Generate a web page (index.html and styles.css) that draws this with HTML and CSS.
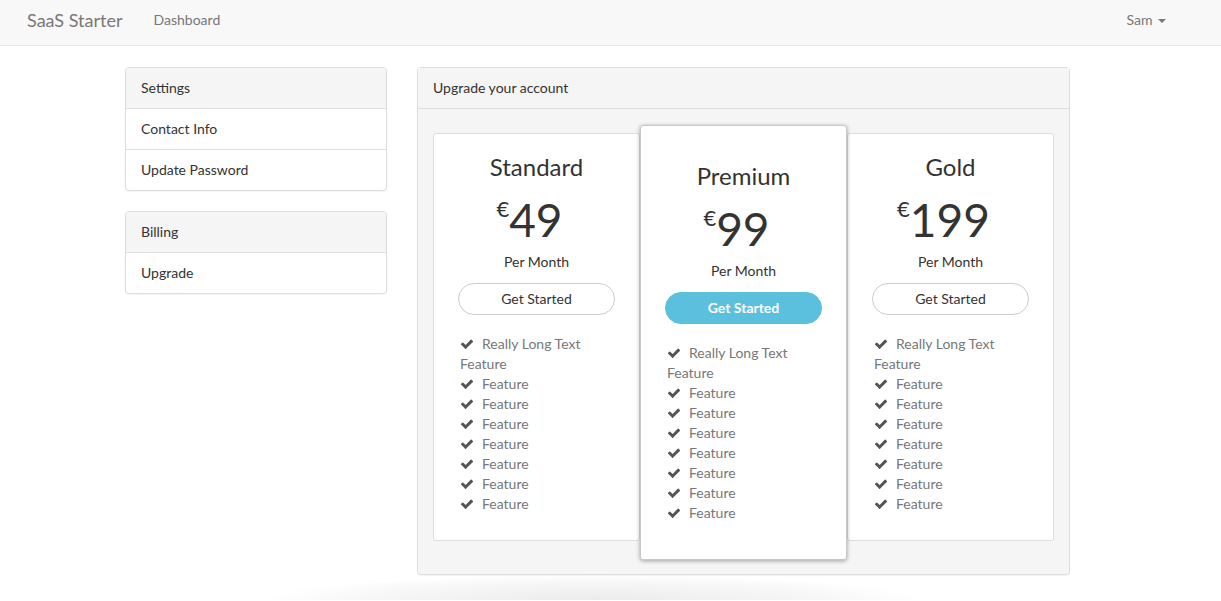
FILE: index.html
```html
<!DOCTYPE html>
<html>
<head>
<meta charset="utf-8">
<title>SaaS Starter</title>
<link rel="stylesheet" href="styles.css">
</head>
<body>
<nav class="navbar">
  <a class="brand" href="#">SaaS Starter</a>
  <a class="nav-link" href="#">Dashboard</a>
  <div class="nav-right">
    <a class="nav-link" href="#">Sam <span class="caret"></span></a>
  </div>
</nav>

<div class="container">
  <aside class="sidebar">
    <div class="panel">
      <div class="panel-heading">Settings</div>
      <a class="list-item" href="#">Contact Info</a>
      <a class="list-item" href="#">Update Password</a>
    </div>
    <div class="panel">
      <div class="panel-heading">Billing</div>
      <a class="list-item" href="#">Upgrade</a>
    </div>
  </aside>

  <main class="panel upgrade">
    <div class="panel-heading">Upgrade your account</div>
    <div class="panel-body">
      <div class="plans">
        <div class="plan">
          <h3 class="plan-title">Standard</h3>
          <div class="price"><span class="currency">€</span>49</div>
          <div class="period">Per Month</div>
          <a class="btn" href="#">Get Started</a>
          <ul class="features">
            <li><svg class="check" viewBox="0 0 1792 1792"><path d="M1671 566q0 40-28 68l-724 724-136 136q-28 28-68 28t-68-28l-136-136-362-362q-28-28-28-68t28-68l136-136q28-28 68-28t68 28l294 295 656-657q28-28 68-28t68 28l136 136q28 28 28 68z"/></svg>Really Long Text Feature</li>
            <li><svg class="check" viewBox="0 0 1792 1792"><path d="M1671 566q0 40-28 68l-724 724-136 136q-28 28-68 28t-68-28l-136-136-362-362q-28-28-28-68t28-68l136-136q28-28 68-28t68 28l294 295 656-657q28-28 68-28t68 28l136 136q28 28 28 68z"/></svg>Feature</li>
            <li><svg class="check" viewBox="0 0 1792 1792"><path d="M1671 566q0 40-28 68l-724 724-136 136q-28 28-68 28t-68-28l-136-136-362-362q-28-28-28-68t28-68l136-136q28-28 68-28t68 28l294 295 656-657q28-28 68-28t68 28l136 136q28 28 28 68z"/></svg>Feature</li>
            <li><svg class="check" viewBox="0 0 1792 1792"><path d="M1671 566q0 40-28 68l-724 724-136 136q-28 28-68 28t-68-28l-136-136-362-362q-28-28-28-68t28-68l136-136q28-28 68-28t68 28l294 295 656-657q28-28 68-28t68 28l136 136q28 28 28 68z"/></svg>Feature</li>
            <li><svg class="check" viewBox="0 0 1792 1792"><path d="M1671 566q0 40-28 68l-724 724-136 136q-28 28-68 28t-68-28l-136-136-362-362q-28-28-28-68t28-68l136-136q28-28 68-28t68 28l294 295 656-657q28-28 68-28t68 28l136 136q28 28 28 68z"/></svg>Feature</li>
            <li><svg class="check" viewBox="0 0 1792 1792"><path d="M1671 566q0 40-28 68l-724 724-136 136q-28 28-68 28t-68-28l-136-136-362-362q-28-28-28-68t28-68l136-136q28-28 68-28t68 28l294 295 656-657q28-28 68-28t68 28l136 136q28 28 28 68z"/></svg>Feature</li>
            <li><svg class="check" viewBox="0 0 1792 1792"><path d="M1671 566q0 40-28 68l-724 724-136 136q-28 28-68 28t-68-28l-136-136-362-362q-28-28-28-68t28-68l136-136q28-28 68-28t68 28l294 295 656-657q28-28 68-28t68 28l136 136q28 28 28 68z"/></svg>Feature</li>
            <li><svg class="check" viewBox="0 0 1792 1792"><path d="M1671 566q0 40-28 68l-724 724-136 136q-28 28-68 28t-68-28l-136-136-362-362q-28-28-28-68t28-68l136-136q28-28 68-28t68 28l294 295 656-657q28-28 68-28t68 28l136 136q28 28 28 68z"/></svg>Feature</li>
          </ul>
        </div>

        <div class="plan featured">
          <h3 class="plan-title">Premium</h3>
          <div class="price"><span class="currency">€</span>99</div>
          <div class="period">Per Month</div>
          <a class="btn btn-info" href="#">Get Started</a>
          <ul class="features">
            <li><svg class="check" viewBox="0 0 1792 1792"><path d="M1671 566q0 40-28 68l-724 724-136 136q-28 28-68 28t-68-28l-136-136-362-362q-28-28-28-68t28-68l136-136q28-28 68-28t68 28l294 295 656-657q28-28 68-28t68 28l136 136q28 28 28 68z"/></svg>Really Long Text Feature</li>
            <li><svg class="check" viewBox="0 0 1792 1792"><path d="M1671 566q0 40-28 68l-724 724-136 136q-28 28-68 28t-68-28l-136-136-362-362q-28-28-28-68t28-68l136-136q28-28 68-28t68 28l294 295 656-657q28-28 68-28t68 28l136 136q28 28 28 68z"/></svg>Feature</li>
            <li><svg class="check" viewBox="0 0 1792 1792"><path d="M1671 566q0 40-28 68l-724 724-136 136q-28 28-68 28t-68-28l-136-136-362-362q-28-28-28-68t28-68l136-136q28-28 68-28t68 28l294 295 656-657q28-28 68-28t68 28l136 136q28 28 28 68z"/></svg>Feature</li>
            <li><svg class="check" viewBox="0 0 1792 1792"><path d="M1671 566q0 40-28 68l-724 724-136 136q-28 28-68 28t-68-28l-136-136-362-362q-28-28-28-68t28-68l136-136q28-28 68-28t68 28l294 295 656-657q28-28 68-28t68 28l136 136q28 28 28 68z"/></svg>Feature</li>
            <li><svg class="check" viewBox="0 0 1792 1792"><path d="M1671 566q0 40-28 68l-724 724-136 136q-28 28-68 28t-68-28l-136-136-362-362q-28-28-28-68t28-68l136-136q28-28 68-28t68 28l294 295 656-657q28-28 68-28t68 28l136 136q28 28 28 68z"/></svg>Feature</li>
            <li><svg class="check" viewBox="0 0 1792 1792"><path d="M1671 566q0 40-28 68l-724 724-136 136q-28 28-68 28t-68-28l-136-136-362-362q-28-28-28-68t28-68l136-136q28-28 68-28t68 28l294 295 656-657q28-28 68-28t68 28l136 136q28 28 28 68z"/></svg>Feature</li>
            <li><svg class="check" viewBox="0 0 1792 1792"><path d="M1671 566q0 40-28 68l-724 724-136 136q-28 28-68 28t-68-28l-136-136-362-362q-28-28-28-68t28-68l136-136q28-28 68-28t68 28l294 295 656-657q28-28 68-28t68 28l136 136q28 28 28 68z"/></svg>Feature</li>
            <li><svg class="check" viewBox="0 0 1792 1792"><path d="M1671 566q0 40-28 68l-724 724-136 136q-28 28-68 28t-68-28l-136-136-362-362q-28-28-28-68t28-68l136-136q28-28 68-28t68 28l294 295 656-657q28-28 68-28t68 28l136 136q28 28 28 68z"/></svg>Feature</li>
          </ul>
        </div>

        <div class="plan">
          <h3 class="plan-title">Gold</h3>
          <div class="price"><span class="currency">€</span>199</div>
          <div class="period">Per Month</div>
          <a class="btn" href="#">Get Started</a>
          <ul class="features">
            <li><svg class="check" viewBox="0 0 1792 1792"><path d="M1671 566q0 40-28 68l-724 724-136 136q-28 28-68 28t-68-28l-136-136-362-362q-28-28-28-68t28-68l136-136q28-28 68-28t68 28l294 295 656-657q28-28 68-28t68 28l136 136q28 28 28 68z"/></svg>Really Long Text Feature</li>
            <li><svg class="check" viewBox="0 0 1792 1792"><path d="M1671 566q0 40-28 68l-724 724-136 136q-28 28-68 28t-68-28l-136-136-362-362q-28-28-28-68t28-68l136-136q28-28 68-28t68 28l294 295 656-657q28-28 68-28t68 28l136 136q28 28 28 68z"/></svg>Feature</li>
            <li><svg class="check" viewBox="0 0 1792 1792"><path d="M1671 566q0 40-28 68l-724 724-136 136q-28 28-68 28t-68-28l-136-136-362-362q-28-28-28-68t28-68l136-136q28-28 68-28t68 28l294 295 656-657q28-28 68-28t68 28l136 136q28 28 28 68z"/></svg>Feature</li>
            <li><svg class="check" viewBox="0 0 1792 1792"><path d="M1671 566q0 40-28 68l-724 724-136 136q-28 28-68 28t-68-28l-136-136-362-362q-28-28-28-68t28-68l136-136q28-28 68-28t68 28l294 295 656-657q28-28 68-28t68 28l136 136q28 28 28 68z"/></svg>Feature</li>
            <li><svg class="check" viewBox="0 0 1792 1792"><path d="M1671 566q0 40-28 68l-724 724-136 136q-28 28-68 28t-68-28l-136-136-362-362q-28-28-28-68t28-68l136-136q28-28 68-28t68 28l294 295 656-657q28-28 68-28t68 28l136 136q28 28 28 68z"/></svg>Feature</li>
            <li><svg class="check" viewBox="0 0 1792 1792"><path d="M1671 566q0 40-28 68l-724 724-136 136q-28 28-68 28t-68-28l-136-136-362-362q-28-28-28-68t28-68l136-136q28-28 68-28t68 28l294 295 656-657q28-28 68-28t68 28l136 136q28 28 28 68z"/></svg>Feature</li>
            <li><svg class="check" viewBox="0 0 1792 1792"><path d="M1671 566q0 40-28 68l-724 724-136 136q-28 28-68 28t-68-28l-136-136-362-362q-28-28-28-68t28-68l136-136q28-28 68-28t68 28l294 295 656-657q28-28 68-28t68 28l136 136q28 28 28 68z"/></svg>Feature</li>
            <li><svg class="check" viewBox="0 0 1792 1792"><path d="M1671 566q0 40-28 68l-724 724-136 136q-28 28-68 28t-68-28l-136-136-362-362q-28-28-28-68t28-68l136-136q28-28 68-28t68 28l294 295 656-657q28-28 68-28t68 28l136 136q28 28 28 68z"/></svg>Feature</li>
          </ul>
        </div>
      </div>
    </div>
  </main>
</div>

<div class="page-fade"></div>
</body>
</html>
```

FILE: styles.css
```css
* {
  box-sizing: border-box;
}

html, body {
  overflow: hidden;
}

body {
  margin: 0;
  font-family: Lato, "Noto Sans", "Liberation Sans", sans-serif;
  font-size: 14px;
  line-height: 20px;
  color: #333;
  background: #fff;
}

a {
  text-decoration: none;
  color: inherit;
}

/* Navbar */
.navbar {
  display: flex;
  align-items: flex-start;
  height: 46px;
  padding: 10px 55px 0 27px;
  background: #f8f8f8;
  border-bottom: 1px solid #e7e7e7;
  color: #777;
}

.brand {
  font-size: 18px;
  line-height: 20px;
  margin-right: 31px;
}

.nav-link {
  font-size: 14px;
  line-height: 20px;
}

.nav-right {
  margin-left: auto;
}

.caret {
  display: inline-block;
  width: 0;
  height: 0;
  margin-left: 2px;
  vertical-align: middle;
  border-top: 4px solid #777;
  border-left: 4px solid transparent;
  border-right: 4px solid transparent;
}

/* Layout */
.container {
  width: 971px;
  margin: 0 auto;
  padding-top: 21px;
  display: flex;
  align-items: flex-start;
  gap: 30px;
}

.sidebar {
  width: 262px;
  flex: none;
}

/* Panels */
.panel {
  background: #fff;
  border: 1px solid #ddd;
  border-radius: 4px;
  box-shadow: 0 1px 1px rgba(0, 0, 0, 0.05);
  margin-bottom: 20px;
  overflow: hidden;
}

.panel-heading {
  background: #f5f5f5;
  padding: 10px 15px;
  color: #333;
  border-bottom: 1px solid #ddd;
}

.list-item {
  display: block;
  padding: 10px 15px;
  color: #333;
  border-top: 1px solid #ddd;
}

.panel-heading + .list-item {
  border-top: none;
}

.upgrade {
  width: 653px;
  flex: none;
  margin-bottom: 0;
  overflow: visible;
  background: #f5f5f5;
}

.panel-body {
  padding: 16px 15px 14px;
  background: #f5f5f5;
  border-radius: 0 0 4px 4px;
}

/* Plans */
.plans {
  display: flex;
  align-items: flex-start;
}

.plan {
  width: 207px;
  flex: none;
  margin-top: 8px;
  padding: 17px 24px 26px;
  background: #fff;
  border: 1px solid #ddd;
  border-radius: 3px;
  text-align: center;
}

.plan.featured {
  position: relative;
  z-index: 1;
  margin-top: 0;
  padding-top: 34px;
  padding-bottom: 36px;
  border-color: #c8c8c8;
  box-shadow: 0 1px 4px rgba(0, 0, 0, 0.35);
}

.plan-title {
  margin: 0;
  font-size: 24px;
  line-height: 31px;
  font-weight: 400;
  color: #333;
}

.price {
  margin-top: 15px;
  font-size: 46px;
  line-height: 46px;
  color: #333;
  padding-right: 14px;
}

.currency {
  font-size: 22px;
  line-height: 0;
  vertical-align: 20px;
}

.period {
  margin-top: 9px;
  color: #333;
}

.btn {
  display: block;
  margin-top: 11px;
  padding: 5px 10px;
  border: 1px solid #ccc;
  border-radius: 17px;
  background: #fff;
  color: #333;
  line-height: 20px;
}

.btn-info {
  background: #5bc0de;
  border-color: #5bc0de;
  color: #fff;
  font-weight: 700;
}

.features {
  list-style: none;
  margin: 19px 0 0;
  padding: 0 0 0 2px;
  text-align: left;
  color: #777;
}

.check {
  width: 14px;
  height: 14px;
  margin-right: 8px;
  vertical-align: -2px;
  fill: #555;
}

/* Decorative fade at the bottom */
.page-fade {
  width: 660px;
  height: 25px;
  margin-left: 265px;
  background: radial-gradient(ellipse 50% 100% at 50% 100%, rgba(0, 0, 0, 0.08), rgba(0, 0, 0, 0.03) 70%, rgba(0, 0, 0, 0) 100%);
}
```
